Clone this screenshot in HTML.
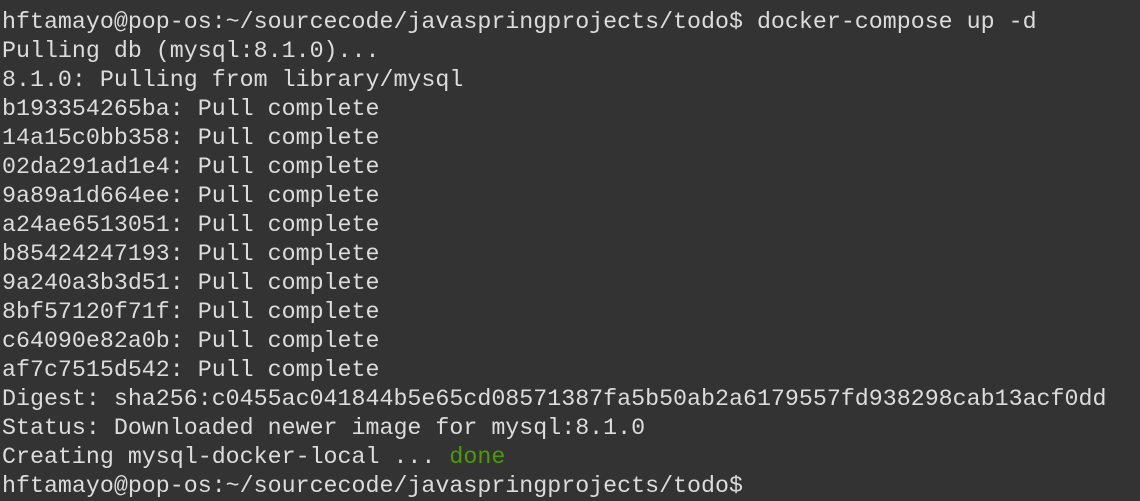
<html><head><style>
body{margin:0;background:#333333;width:1140px;height:479px;overflow:hidden}
pre{margin:0;padding:8px 0 0 2px;font-family:"Liberation Mono",monospace;font-size:23.3px;line-height:29px;color:#dcdcdc;letter-spacing:0}
.g{color:#4e9a06}
</style></head><body><pre>hftamayo@pop-os:~/sourcecode/javaspringprojects/todo$ docker-compose up -d
Pulling db (mysql:8.1.0)...
8.1.0: Pulling from library/mysql
b193354265ba: Pull complete
14a15c0bb358: Pull complete
02da291ad1e4: Pull complete
9a89a1d664ee: Pull complete
a24ae6513051: Pull complete
b85424247193: Pull complete
9a240a3b3d51: Pull complete
8bf57120f71f: Pull complete
c64090e82a0b: Pull complete
af7c7515d542: Pull complete
Digest: sha256:c0455ac041844b5e65cd08571387fa5b50ab2a6179557fd938298cab13acf0dd
Status: Downloaded newer image for mysql:8.1.0
Creating mysql-docker-local ... <span class="g">done</span>
hftamayo@pop-os:~/sourcecode/javaspringprojects/todo$ </pre></body></html>
